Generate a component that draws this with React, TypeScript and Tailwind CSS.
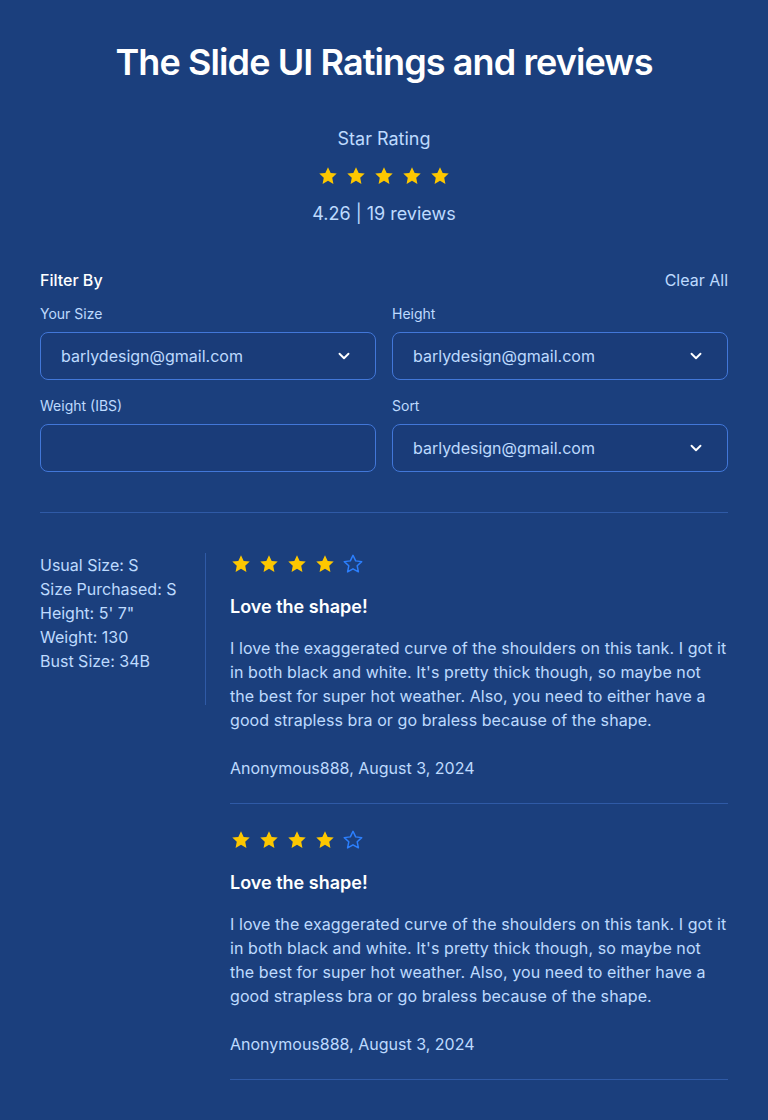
import { ChevronDown } from 'lucide-react';

function Star({ filled }: { filled: boolean }) {
  return (
    <svg width="22" height="22" viewBox="0 0 24 24" className={filled ? 'text-yellow-400' : 'text-blue-500'}>
      <path
        d="M12 2.5l2.9 6.1 6.6.8-4.9 4.6 1.3 6.6L12 17.3l-5.9 3.3 1.3-6.6-4.9-4.6 6.6-.8z"
        fill={filled ? 'currentColor' : 'none'}
        stroke="currentColor"
        strokeWidth={filled ? 0 : 1.6}
        strokeLinejoin="round"
      />
    </svg>
  );
}

function Stars({ count }: { count: number }) {
  return (
    <div className="flex gap-1.5">
      {[0, 1, 2, 3, 4].map((i) => (
        <Star key={i} filled={i < count} />
      ))}
    </div>
  );
}

function SelectBox({ label, value }: { label: string; value?: string }) {
  return (
    <div>
      <div className="text-sm text-blue-200 mb-2 leading-5">{label}</div>
      <div className="h-12 rounded-lg border border-[#4277d8] bg-[#1a3c79] flex items-center justify-between pl-5 pr-[22px]">
        <span className="text-base text-blue-200">{value}</span>
        {value && <ChevronDown size={18} strokeWidth={2.5} className="text-white" />}
      </div>
    </div>
  );
}

function Review() {
  return (
    <div className="border-b border-[#2f5aa6] pb-[23px]">
      <Stars count={4} />
      <h3 className="text-white font-semibold text-lg mt-[18px] leading-7">Love the shape!</h3>
      <p className="text-blue-200 text-base leading-6 mt-[15px] tracking-[0.08px]">
        I love the exaggerated curve of the shoulders on this tank. I got it in both black and white. It's pretty thick
        though, so maybe not the best for super hot weather. Also, you need to either have a good strapless bra or go
        braless because of the shape.
      </p>
      <p className="text-blue-200 text-base leading-6 mt-6">Anonymous888, August 3, 2024</p>
    </div>
  );
}

export default function App() {
  return (
    <div className="min-h-screen bg-[#1b3f7d] px-10 pt-10 pb-10" style={{ fontFamily: 'Inter, sans-serif' }}>
      <h1 className="text-center text-white text-[36px] font-semibold leading-[44px] tracking-tight">
        The Slide UI Ratings and reviews
      </h1>

      <div className="flex flex-col items-center mt-[41px]">
        <div className="text-lg text-blue-200 leading-7">Star Rating</div>
        <div className="mt-3">
          <Stars count={5} />
        </div>
        <div className="text-lg text-blue-200 leading-7 mt-[13px]">4.26 | 19 reviews</div>
      </div>

      <div className="mt-10">
        <div className="flex justify-between items-center">
          <span className="text-white font-medium text-base">Filter By</span>
          <span className="text-blue-200 text-base">Clear All</span>
        </div>
        <div className="grid grid-cols-2 gap-x-4 gap-y-4 mt-3">
          <SelectBox label="Your Size" value="barlydesign@gmail.com" />
          <SelectBox label="Height" value="barlydesign@gmail.com" />
          <SelectBox label="Weight (IBS)" />
          <SelectBox label="Sort" value="barlydesign@gmail.com" />
        </div>
      </div>

      <div className="border-t border-[#2f5aa6] mt-10 pt-10 flex">
        <div className="w-[166px] shrink-0 border-r border-[#2f5aa6] h-[152px] text-blue-200 text-base leading-6">
          <div>Usual Size: S</div>
          <div>Size Purchased: S</div>
          <div>Height: 5' 7"</div>
          <div>Weight: 130</div>
          <div>Bust Size: 34B</div>
        </div>
        <div className="flex-1 pl-6 flex flex-col gap-[25px]">
          <Review />
          <Review />
        </div>
      </div>
    </div>
  );
}
